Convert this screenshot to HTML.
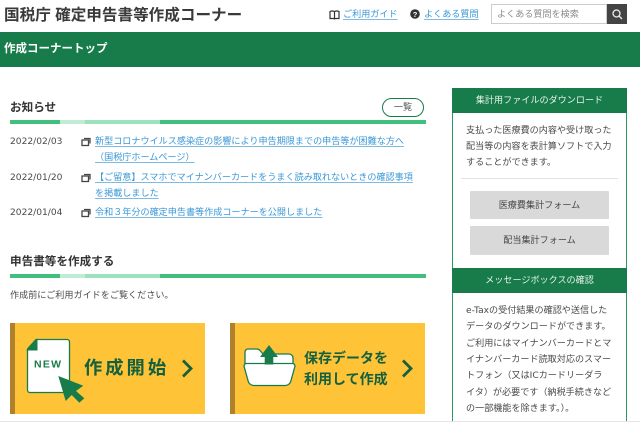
<!DOCTYPE html>
<html lang="ja"><head><meta charset="utf-8"><title>確定申告書等作成コーナー</title>
<style>
html,body{margin:0;padding:0;background:#fff}
body{width:640px;height:422px;overflow:hidden;position:relative;font-family:"DejaVu Sans","Noto Sans CJK JP",sans-serif;font-size:9.1px;color:#4a4a4a}
.a{position:absolute;white-space:nowrap}
.t{line-height:16px;height:16px}
.l{color:#3a97d6;text-decoration:underline;text-decoration-color:#7dbbe5;text-decoration-thickness:1.3px;text-underline-offset:1.5px}
.h{font-family:"Liberation Sans","Noto Sans CJK JP",sans-serif;font-weight:700;color:#333}
.bar{position:absolute;height:4px}
.b{font-family:"Liberation Sans","Noto Sans CJK JP",sans-serif;font-weight:700;color:#14603f}
</style></head><body>
<div class="a h" style="left:4px;top:5px;font-size:15.6px;line-height:22px;color:#3a3a3a">国税庁&nbsp;確定申告書等作成コーナー</div>

<svg class="a" style="left:329px;top:9px" width="11" height="11" viewBox="0 0 11 11" fill="none" stroke="#333" stroke-width="1.2"><path d="M1 2.500c1.500-.7 3-.7 4.500 0 1.500-.7 3-.7 4.500 0v7H6.500l-1 .5-1-.5H1zM5.500 2.500v7"/></svg>
<div class="a t l" style="left:343px;top:7px">ご利用ガイド</div>
<svg class="a" style="left:410px;top:9px" width="10" height="10" viewBox="0 0 10 10"><circle cx="5" cy="5" r="4.800" fill="#333"/><text x="5" y="8" font-size="7.500" font-weight="700" text-anchor="middle" fill="#fff" font-family="Liberation Sans">?</text></svg>
<div class="a t l" style="left:424px;top:7px">よくある質問</div>
<div class="a" style="left:491px;top:4px;width:116px;height:20px;box-sizing:border-box;border:1px solid #ccc;background:#fff"></div>
<div class="a t" style="left:497px;top:7px;color:#8a8a8a">よくある質問を検索</div>
<div class="a" style="left:607px;top:4px;width:20px;height:20px;background:#444"></div>
<svg class="a" style="left:611px;top:8px" width="13" height="13" viewBox="0 0 13 13" fill="none" stroke="#eee" stroke-width="1.300"><circle cx="5.500" cy="5.500" r="3.500"/><path d="M8 8l3 3"/></svg>

<div class="a" style="left:0;top:32px;width:640px;height:35px;background:#187c4a"></div>
<div class="a h" style="left:4px;top:41px;font-size:11.500px;line-height:16px;color:#fff">作成コーナートップ</div>

<div class="a h" style="left:10px;top:99px;font-size:11.600px;line-height:18px">お知らせ</div>
<div class="a" style="left:382px;top:98px;width:42px;height:19px;box-sizing:border-box;border:1.500px solid #187c4a;border-radius:10px;text-align:center;line-height:18px;color:#555">一覧</div>
<div class="bar" style="left:10px;top:120px;width:416px;background:#40c07c"></div>
<div class="bar" style="left:60px;top:120px;width:25px;background:#c0ebd4"></div>
<div class="bar" style="left:85px;top:120px;width:75px;background:#9de2bf"></div>

<div class="a t" style="left:10px;top:134px">2022/02/03</div>
<div class="a t" style="left:10px;top:170px">2022/01/20</div>
<div class="a t" style="left:10px;top:205px">2022/01/04</div>
<svg class="a" style="left:81px;top:137px" width="10" height="10" viewBox="0 0 10 10" fill="none" stroke="#444" stroke-width="1.300"><rect x="1" y="3" width="6.500" height="5.500"/><path d="M3 1.500h6v5"/></svg>
<svg class="a" style="left:81px;top:173px" width="10" height="10" viewBox="0 0 10 10" fill="none" stroke="#444" stroke-width="1.300"><rect x="1" y="3" width="6.500" height="5.500"/><path d="M3 1.500h6v5"/></svg>
<svg class="a" style="left:81px;top:208px" width="10" height="10" viewBox="0 0 10 10" fill="none" stroke="#444" stroke-width="1.300"><rect x="1" y="3" width="6.500" height="5.500"/><path d="M3 1.500h6v5"/></svg>
<div class="a t l" style="left:95px;top:134px">新型コロナウイルス感染症の影響により申告期限までの申告等が困難な方へ</div>
<div class="a t l" style="left:95px;top:150px">（国税庁ホームページ）</div>
<div class="a t l" style="left:95px;top:170px">【ご留意】スマホでマイナンバーカードをうまく読み取れないときの確認事項</div>
<div class="a t l" style="left:95px;top:186px">を掲載しました</div>
<div class="a t l" style="left:95px;top:205px">令和３年分の確定申告書等作成コーナーを公開しました</div>

<div class="a h" style="left:10px;top:253px;font-size:11.600px;line-height:18px">申告書等を作成する</div>
<div class="bar" style="left:10px;top:274px;width:416px;background:#40c07c"></div>
<div class="bar" style="left:60px;top:274px;width:25px;background:#c0ebd4"></div>
<div class="bar" style="left:85px;top:274px;width:75px;background:#9de2bf"></div>
<div class="a t" style="left:10px;top:288px">作成前にご利用ガイドをご覧ください。</div>

<div class="a" style="left:10px;top:323px;width:195px;height:91px;background:#fec336"></div>
<div class="a" style="left:10px;top:323px;width:5px;height:91px;background:#b0812c"></div>
<svg class="a" style="left:0;top:315px" width="220" height="107" viewBox="0 315 220 107">
<path d="M36 339.500H67a2.500 2.500 0 0 1 2.500 2.500V390a2.500 2.500 0 0 1-2.500 2.500H30a2.500 2.500 0 0 1-2.500-2.500V349z" fill="#fff" stroke="#187c4a" stroke-width="1.300"/>
<path d="M37 339.500V350H27.500z" fill="#187c4a" stroke="#187c4a"/>
<text x="34" y="367.500" font-family="Liberation Sans" font-weight="700" font-size="10.500" letter-spacing="1.300" fill="#187c4a">NEW</text>
<path d="M58.300 376L83.300 385.700 76 391 84.300 398.300 79.300 402.700 71.700 395 65.700 401z" fill="#187c4a"/>
<path d="M183 360.500l8 8-8 8" fill="none" stroke="#14603f" stroke-width="2.800"/>
</svg>
<div class="a b" style="left:84px;top:355px;font-size:18.300px;line-height:26px;letter-spacing:3px">作成開始</div>

<div class="a" style="left:230px;top:323px;width:195px;height:91px;background:#fec336"></div>
<div class="a" style="left:230px;top:323px;width:5px;height:91px;background:#b0812c"></div>
<svg class="a" style="left:220px;top:315px" width="220" height="107" viewBox="220 315 220 107">
<path d="M245 365V352a3 3 0 0 1 3-3h9a4 4 0 0 1 3 1.500l3 3.500h26a4 4 0 0 1 4 4v8z" fill="#fff" stroke="#187c4a" stroke-width="1.300"/>
<path d="M244.500 363.500h48a2.500 2.500 0 0 1 2.400 3l-3.900 14a6 6 0 0 1-5.500 5h-32a6 6 0 0 1-5.500-5l-3.900-14a2.500 2.500 0 0 1 2.400-3z" fill="#fff" stroke="#187c4a" stroke-width="1.300"/>
<path d="M269 345l9 12h-4.700v7.500h-8.600V357H260z" fill="#187c4a"/>
<path d="M403 360.500l8 8-8 8" fill="none" stroke="#14603f" stroke-width="2.800"/>
</svg>
<div class="a b" style="left:304px;top:348px;font-size:14px;line-height:21px">保存データを<br>利用して作成</div>

<div class="a" style="left:452px;top:88px;width:175px;height:333px;box-sizing:border-box;border:1px solid #2a9a60;border-bottom:0;background:#fff"></div>
<div class="a" style="left:452px;top:88px;width:175px;height:25px;background:#187c4a"></div>
<div class="a t" style="left:452px;top:93px;width:175px;text-align:center;color:#e8f3ec">集計用ファイルのダウンロード</div>
<div class="a t" style="left:466px;top:123px">支払った医療費の内容や受け取った</div>
<div class="a t" style="left:466px;top:139px">配当等の内容を表計算ソフトで入力</div>
<div class="a t" style="left:466px;top:155px">することができます。</div>
<div class="a" style="left:461px;top:178px;width:157px;height:1px;background:#e2e2e2"></div>
<div class="a" style="left:470px;top:191px;width:139px;height:28px;background:#d9d9d9;border-radius:1px;text-align:center;line-height:30px;color:#444">医療費集計フォーム</div>
<div class="a" style="left:470px;top:226px;width:139px;height:29px;background:#d9d9d9;border-radius:1px;text-align:center;line-height:31px;color:#444">配当集計フォーム</div>
<div class="a" style="left:452px;top:268px;width:175px;height:25px;background:#187c4a"></div>
<div class="a t" style="left:452px;top:273px;width:175px;text-align:center;color:#e8f3ec">メッセージボックスの確認</div>
<div class="a t" style="left:466px;top:303px">e-Taxの受付結果の確認や送信した</div>
<div class="a t" style="left:466px;top:319px">データのダウンロードができます。</div>
<div class="a t" style="left:466px;top:336px">ご利用にはマイナンバーカードとマ</div>
<div class="a t" style="left:466px;top:352px">イナンバーカード読取対応のスマー</div>
<div class="a t" style="left:466px;top:368px">トフォン（又はICカードリーダラ</div>
<div class="a t" style="left:466px;top:385px">イタ）が必要です（納税手続きなど</div>
<div class="a t" style="left:466px;top:401px">の一部機能を除きます。）。</div>
<div class="a" style="left:0;top:421px;width:640px;height:1px;background:#e5e5e5"></div>
</body></html>
